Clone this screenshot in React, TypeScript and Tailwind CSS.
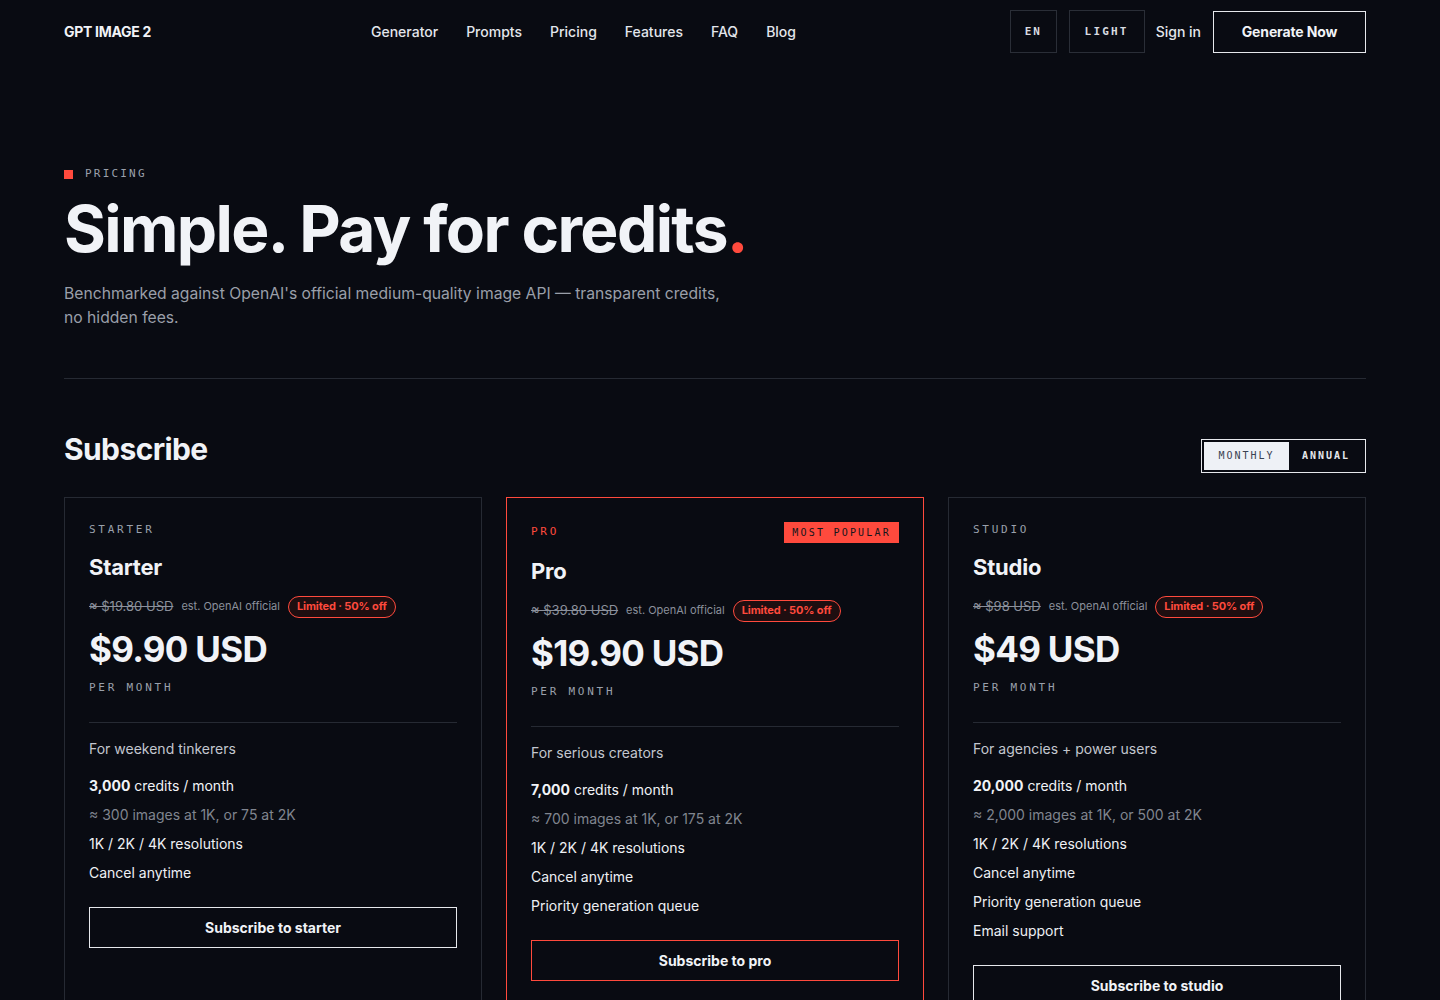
import React from 'react';

const sans = "font-['Inter','Noto_Sans',sans-serif]";
const mono = "font-['DejaVu_Sans_Mono','Liberation_Mono',monospace]";

type Plan = {
  key: string;
  label: string;
  name: string;
  old: string;
  price: string;
  tagline: string;
  credits: string;
  images: string;
  extras: string[];
  popular?: boolean;
};

const plans: Plan[] = [
  {
    key: 'starter',
    label: 'STARTER',
    name: 'Starter',
    old: '≈ $19.80 USD',
    price: '$9.90 USD',
    tagline: 'For weekend tinkerers',
    credits: '3,000',
    images: '≈ 300 images at 1K, or 75 at 2K',
    extras: ['1K / 2K / 4K resolutions', 'Cancel anytime'],
  },
  {
    key: 'pro',
    label: 'PRO',
    name: 'Pro',
    old: '≈ $39.80 USD',
    price: '$19.90 USD',
    tagline: 'For serious creators',
    credits: '7,000',
    images: '≈ 700 images at 1K, or 175 at 2K',
    extras: ['1K / 2K / 4K resolutions', 'Cancel anytime', 'Priority generation queue'],
    popular: true,
  },
  {
    key: 'studio',
    label: 'STUDIO',
    name: 'Studio',
    old: '≈ $98 USD',
    price: '$49 USD',
    tagline: 'For agencies + power users',
    credits: '20,000',
    images: '≈ 2,000 images at 1K, or 500 at 2K',
    extras: ['1K / 2K / 4K resolutions', 'Cancel anytime', 'Priority generation queue', 'Email support'],
  },
];

function PlanCard({ plan }: { plan: Plan }) {
  return (
    <div className={`border px-6 pt-[25px] pb-10 ${plan.popular ? 'border-[#ff4a3d]' : 'border-[#262a33]'}`}>
      <div className={`flex items-center justify-between ${plan.popular ? 'h-[21px] -mt-px' : 'h-[14px]'}`}>
        <span className={`${mono} text-[11px] leading-[14px] tracking-[0.25em] ${plan.popular ? 'text-[#ff4a3d]' : 'text-[#9aa0ab]'}`}>
          {plan.label}
        </span>
        {plan.popular && (
          <span className={`${mono} bg-[#ff4a3d] text-[#14161c] text-[10px] tracking-[0.22em] px-2 h-[21px] flex items-center`}>
            MOST POPULAR
          </span>
        )}
      </div>
      <div
        className={`text-[22px] leading-[30px] font-bold text-[#f1f3f7] tracking-[-0.01em] ${plan.popular ? 'mt-[13px]' : 'mt-[15px]'}`}
      >
        {plan.name}
      </div>
      <div className="flex items-center gap-2 mt-[14px] h-[22px]">
        <span className="text-[13px] text-[#8b909b] line-through decoration-[#8b909b]">{plan.old}</span>
        <span className="text-[11px] text-[#8b909b]">est. OpenAI official</span>
        <span className="text-[11px] font-bold text-[#ff4a3d] border border-[#ff4a3d] bg-[#1e0e10] rounded-full px-2 h-[22px] flex items-center tracking-[-0.01em]">
          Limited · 50% off
        </span>
      </div>
      <div className="text-[35px] font-bold text-[#f1f3f7] tracking-[-0.02em] leading-[48px] mt-[7px]">
        {plan.price}
      </div>
      <div className={`${mono} text-[11px] leading-[16px] tracking-[0.25em] text-[#9aa0ab] mt-[7px]`}>PER MONTH</div>
      <div className="h-px bg-[#262a33] mt-[26px]" />
      <div className="text-[14px] leading-[20px] text-[#c3c7cf] mt-[16px]">{plan.tagline}</div>
      <div className="mt-[16px] flex flex-col gap-[8px] text-[14px] leading-[21px]">
        <div className="text-[#f1f3f7]">
          <span className="font-bold">{plan.credits}</span> credits / month
        </div>
        <div className="text-[#80858f]">{plan.images}</div>
        {plan.extras.map((e) => (
          <div key={e} className="text-[#eef0f4]">
            {e}
          </div>
        ))}
      </div>
      <button
        className={`w-full h-[41px] mt-6 border text-[14px] font-bold text-[#f1f3f7] ${plan.popular ? 'border-[#ff4a3d]' : 'border-[#e6e8ec]'}`}
      >
        Subscribe to {plan.key}
      </button>
    </div>
  );
}

export default function App() {
  return (
    <div className={`${sans} min-h-screen bg-[#090b12] text-[#f1f3f7]`}>
      <header className="pl-16 pr-[74px] h-[63px] flex items-center">
        <div className="text-[14px] font-bold tracking-[-0.02em] w-[240px]">GPT IMAGE 2</div>
        <nav className="flex items-center gap-7 text-[14px] font-medium text-[#e3e6ec] ml-[67px]">
          <span>Generator</span>
          <span>Prompts</span>
          <span>Pricing</span>
          <span>Features</span>
          <span>FAQ</span>
          <span>Blog</span>
        </nav>
        <div className="ml-auto flex items-center">
          <div className={`${mono} h-[43px] w-[47px] border border-[#2a2e37] flex items-center justify-center text-[11px] font-bold tracking-[0.15em] text-[#d8dbe1] pt-[2px]`}>
            EN
          </div>
          <div className={`${mono} h-[43px] w-[76px] border border-[#2a2e37] ml-3 flex items-center justify-center text-[11px] font-bold tracking-[0.2em] text-[#d8dbe1] pt-[2px]`}>
            LIGHT
          </div>
          <span className="text-[14px] font-medium text-[#e3e6ec] ml-[11px]">Sign in</span>
          <button className="h-[42px] w-[153px] ml-3 border border-[#e6e8ec] text-[14px] font-bold tracking-[-0.01em]">
            Generate Now
          </button>
        </div>
      </header>

      <main className="pl-16 pr-[74px]">
        <div className="pt-[103px] flex items-center gap-3">
          <span className="w-[9px] h-[9px] bg-[#ff4a3d]" />
          <span className={`${mono} text-[11px] tracking-[0.2em] text-[#9aa0ab]`}>PRICING</span>
        </div>
        <h1 className="text-[64px] font-bold tracking-[-0.025em] leading-[72px] mt-[10px] text-[#f1f3f7]">
          Simple. Pay for credits<span className="text-[#ff4a3d]">.</span>
        </h1>
        <p className="text-[15.7px] leading-[24px] text-[#9a9fa9] mt-[17px] w-[670px]">
          Benchmarked against OpenAI's official medium-quality image API — transparent credits, no hidden fees.
        </p>
        <div className="h-px bg-[#262a33] mt-[48px]" />

        <div className="flex items-start justify-between mt-[50px]">
          <h2 className="text-[30px] font-bold tracking-[-0.02em] leading-[40px]">Subscribe</h2>
          <div className="border border-[#e6e8ec] p-[2px] flex h-[34px] mt-[10px]">
            <div className={`${mono} bg-[#eef1f6] text-[#3a4252] text-[10px] tracking-[0.2em] w-[85px] flex items-center justify-center`}>
              MONTHLY
            </div>
            <div className={`${mono} text-[#e6e8ec] text-[10px] font-bold tracking-[0.2em] w-[74px] flex items-center justify-center`}>
              ANNUAL
            </div>
          </div>
        </div>

        <div className="grid grid-cols-3 gap-6 mt-6">
          {plans.map((p) => (
            <PlanCard key={p.key} plan={p} />
          ))}
        </div>
      </main>
    </div>
  );
}
